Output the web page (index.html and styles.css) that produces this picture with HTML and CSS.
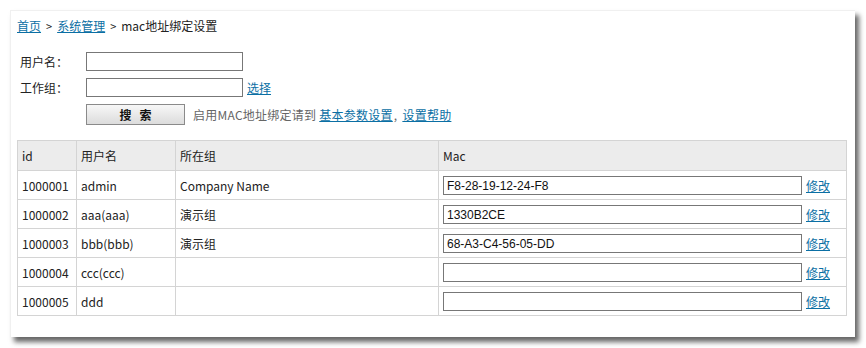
FILE: index.html
```html
<!DOCTYPE html>
<html lang="zh-CN">
<head>
  <meta charset="UTF-8">
  <title>mac地址绑定设置</title>
  <link rel="stylesheet" href="styles.css">
</head>
<body>
  <div class="panel">
    <div class="crumbs">
      <a href="#">首页</a><span class="sep">&gt;</span><a href="#">系统管理</a><span class="sep">&gt;</span>mac地址绑定设置
    </div>

    <form class="search-form">
      <div class="form-row">
        <label>用户名：</label>
        <input type="text" class="text-input">
      </div>
      <div class="form-row">
        <label>工作组：</label>
        <input type="text" class="text-input">
        <a href="#" class="pick">选择</a>
      </div>
      <div class="form-row btn-row">
        <label></label>
        <button type="button" class="search-btn">搜索</button>
        <span class="hint">启用MAC地址绑定请到 <a href="#">基本参数设置</a><span class="comma">,</span><a href="#">设置帮助</a></span>
      </div>
    </form>

    <table class="mac-table">
      <thead>
        <tr>
          <th class="col-id">id</th>
          <th class="col-user">用户名</th>
          <th class="col-group">所在组</th>
          <th>Mac</th>
        </tr>
      </thead>
      <tbody>
        <tr>
          <td>1000001</td>
          <td>admin</td>
          <td>Company Name</td>
          <td class="mac-cell"><input type="text" class="mac-input" value="F8-28-19-12-24-F8"><a href="#">修改</a></td>
        </tr>
        <tr>
          <td>1000002</td>
          <td>aaa(aaa)</td>
          <td>演示组</td>
          <td class="mac-cell"><input type="text" class="mac-input" value="1330B2CE"><a href="#">修改</a></td>
        </tr>
        <tr>
          <td>1000003</td>
          <td>bbb(bbb)</td>
          <td>演示组</td>
          <td class="mac-cell"><input type="text" class="mac-input" value="68-A3-C4-56-05-DD"><a href="#">修改</a></td>
        </tr>
        <tr>
          <td>1000004</td>
          <td>ccc(ccc)</td>
          <td></td>
          <td class="mac-cell"><input type="text" class="mac-input" value=""><a href="#">修改</a></td>
        </tr>
        <tr>
          <td>1000005</td>
          <td>ddd</td>
          <td></td>
          <td class="mac-cell"><input type="text" class="mac-input" value=""><a href="#">修改</a></td>
        </tr>
      </tbody>
    </table>
  </div>
</body>
</html>
```

FILE: styles.css
```css
body {
    margin: 0;
    padding-bottom: 11px;
    background: #fff;
    font-family: "Noto Sans CJK SC", "Noto Sans", sans-serif;
    font-size: 12px;
    color: #222;
}
a {
    color: #0b6fa4;
    text-decoration: underline;
}
.panel {
    margin: 10px 0 0 10px;
    width: 845px;
    height: 327px;
    box-sizing: border-box;
    padding: 6px 8px 0 6px;
    background: #fff;
    border-top: 1px solid #f0f0f0;
    border-left: 1px solid #f0f0f0;
    box-shadow: 4px 5px 5px rgba(0, 0, 0, 0.6);
}
.crumbs {
    line-height: 18px;
    font-size: 12px;
}
.crumbs .sep {
    font-size: 11px;
    margin: 0 5px;
}
.search-form {
    margin-top: 17px;
    padding-left: 3px;
    display: flex;
    flex-direction: column;
    gap: 7px;
}
.form-row {
    display: flex;
    align-items: center;
    height: 19px;
}
.form-row label {
    width: 66px;
    flex: none;
}
.btn-row {
    height: 22px;
    margin-top: -1px;
}
.text-input {
    width: 157px;
    height: 19px;
    box-sizing: border-box;
    border: 1px solid #777;
    margin: 0;
    padding: 0 3px;
}
.pick {
    margin-left: 4px;
}
.search-btn {
    width: 99px;
    height: 21px;
    margin: 0;
    border: 1px solid #8a8a8a;
    background: linear-gradient(#f7f7f7, #dcdcdc);
    font-family: "Noto Sans CJK SC", sans-serif;
    font-size: 12px;
    font-weight: bold;
    letter-spacing: 8px;
    padding: 0 0 0 8px;
    color: #111;
    cursor: pointer;
}
.hint {
    margin-left: 8px;
    color: #666;
    letter-spacing: 0.25px;
}
.hint .comma {
    margin: 0 5px 0 1px;
}
.mac-table {
    margin-top: 15px;
    width: 830px;
    border-collapse: collapse;
    border: 1px solid #d4d4d4;
}
.mac-table th,
.mac-table td {
    border: 1px solid #d4d4d4;
    text-align: left;
    font-weight: normal;
    padding: 0 4px;
    height: 28px;
    white-space: nowrap;
}
.mac-table th {
    background: #ececec;
    height: 29px;
}
.col-id {
    width: 50px;
}
.col-user {
    width: 90px;
}
.col-group {
    width: 254px;
}
.mac-table td.mac-cell {
    padding-right: 0;
}
.mac-input {
    width: 359px;
    height: 19px;
    box-sizing: border-box;
    border: 1px solid #777;
    margin: 0 4px 0 0;
    padding: 0 3px;
    font-family: "Liberation Sans", Arial, sans-serif;
    font-size: 12px;
    color: #111;
    vertical-align: middle;
}
.mac-cell a {
    vertical-align: middle;
}
```
